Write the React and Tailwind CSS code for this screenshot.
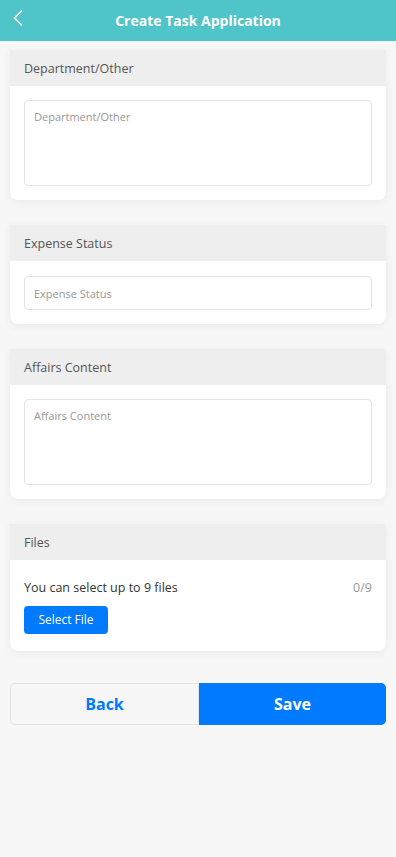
import React from 'react';

const font = { fontFamily: '"Open Sans", "Noto Sans", sans-serif' };

const Section = ({ title, children, bodyClass = 'p-[14px]' }) => {
  return (
    <div className="bg-white rounded-b-lg shadow-[0_2px_8px_rgba(0,0,0,0.06)]">
      <div className="h-9 bg-[#eeeeee] px-[14px] pt-[2px] flex items-center text-[12.5px] text-[#555]">{title}</div>
      <div className={bodyClass}>{children}</div>
    </div>
  );
};

const App = () => {
  return (
    <div className="min-h-[857px] bg-[#f7f7f7]" style={font}>
      <div className="h-[41px] bg-[#4fc5ca] flex items-center justify-center relative">
        <svg className="absolute left-[12px] top-[9px]" width="12" height="18" viewBox="0 0 12 18" fill="none">
          <path d="M10 1.5 L2.5 9 L10 16.5" stroke="white" strokeWidth="1.6" />
        </svg>
        <h1 className="text-white font-bold text-[14px]">Create Task Application</h1>
      </div>

      <div className="px-[10px] pt-[9px] flex flex-col gap-[25px]">
        <Section title="Department/Other">
          <textarea
            className="block w-full h-[86px] border border-[#e3e3e3] rounded-[4px] px-[9px] py-[8px] text-[11px] placeholder-[#999] resize-none outline-none"
            placeholder="Department/Other"
          />
        </Section>
        <Section title="Expense Status" bodyClass="px-[14px] pt-[15px] pb-[14px]">
          <input
            className="block w-full h-[34px] border border-[#e3e3e3] rounded-[4px] px-[9px] text-[11px] placeholder-[#999] outline-none"
            placeholder="Expense Status"
          />
        </Section>
        <Section title="Affairs Content">
          <textarea
            className="block w-full h-[86px] border border-[#e3e3e3] rounded-[4px] px-[9px] py-[8px] text-[11px] placeholder-[#999] resize-none outline-none"
            placeholder="Affairs Content"
          />
        </Section>
        <Section title="Files" bodyClass="px-[14px] pt-[18px] pb-[17px]">
          <div className="flex justify-between items-center text-[12.5px] leading-[20px]">
            <span className="text-[#333]">You can select up to 9 files</span>
            <span className="text-[#999]">0/9</span>
          </div>
          <button className="mt-[8px] h-[28px] w-[84px] bg-[#007aff] text-white text-[12px] rounded-[4px]">Select File</button>
        </Section>
      </div>

      <div className="px-[10px] mt-[32px] flex">
        <button className="flex-1 h-[42px] bg-[#f7f7f7] border border-[#e3e3e3] rounded-l-[5px] text-[#007aff] font-bold text-[16px]">Back</button>
        <button className="flex-1 h-[42px] bg-[#007aff] rounded-r-[5px] text-white font-bold text-[16px]">Save</button>
      </div>
    </div>
  );
};

export default App;
